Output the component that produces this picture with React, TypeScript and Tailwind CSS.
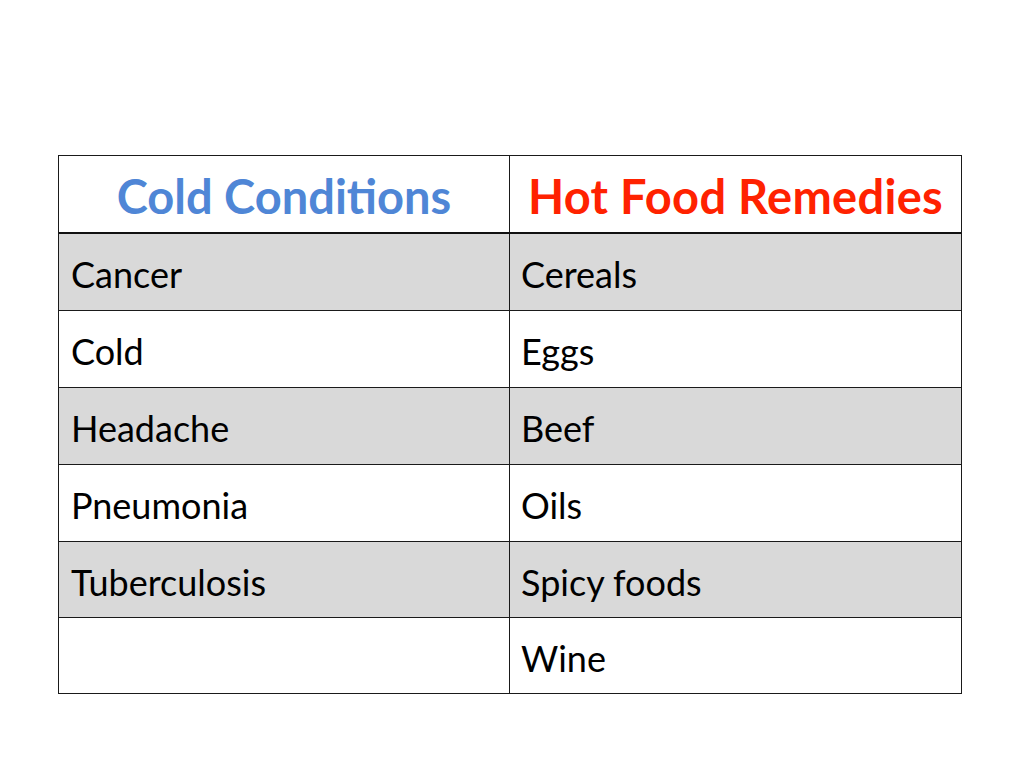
const rows: [string, string][] = [
  ["Cancer", "Cereals"],
  ["Cold", "Eggs"],
  ["Headache", "Beef"],
  ["Pneumonia", "Oils"],
  ["Tuberculosis", "Spicy foods"],
  ["", "Wine"],
];

export default function App() {
  return (
    <div
      className="w-[1024px] h-[768px] bg-white pt-[155px] pl-[58px]"
      style={{ fontFamily: "Lato, 'Open Sans', sans-serif" }}
    >
      <div className="w-[904px] border border-[#1a1a1a]">
        <div className="grid grid-cols-2 h-[78px] border-b-2 border-[#111]">
          <div className="flex items-center justify-center text-[47px] font-bold text-[#4f86d6] border-r border-[#1a1a1a] pt-1 leading-none">
            Cold Conditions
          </div>
          <div className="flex items-center justify-center text-[47px] font-bold text-[#ff2200] pt-1 leading-none tracking-[0.3px]">
            Hot Food Remedies
          </div>
        </div>
        {rows.map(([a, b], i) => (
          <div
            key={i}
            className={`grid grid-cols-2 ${i === rows.length - 1 ? "h-[75px]" : i === rows.length - 2 ? "h-[76px]" : "h-[77px]"} text-[36px] leading-none text-black ${
              i % 2 === 0 ? "bg-[#d9d9d9]" : "bg-white"
            } ${i < rows.length - 1 ? "border-b border-[#1a1a1a]" : ""}`}
          >
            <div className="flex items-center pl-[12px] pt-1 border-r border-[#1a1a1a]">{a}</div>
            <div className="flex items-center pl-[11px] pt-1">{b}</div>
          </div>
        ))}
      </div>
    </div>
  );
}
